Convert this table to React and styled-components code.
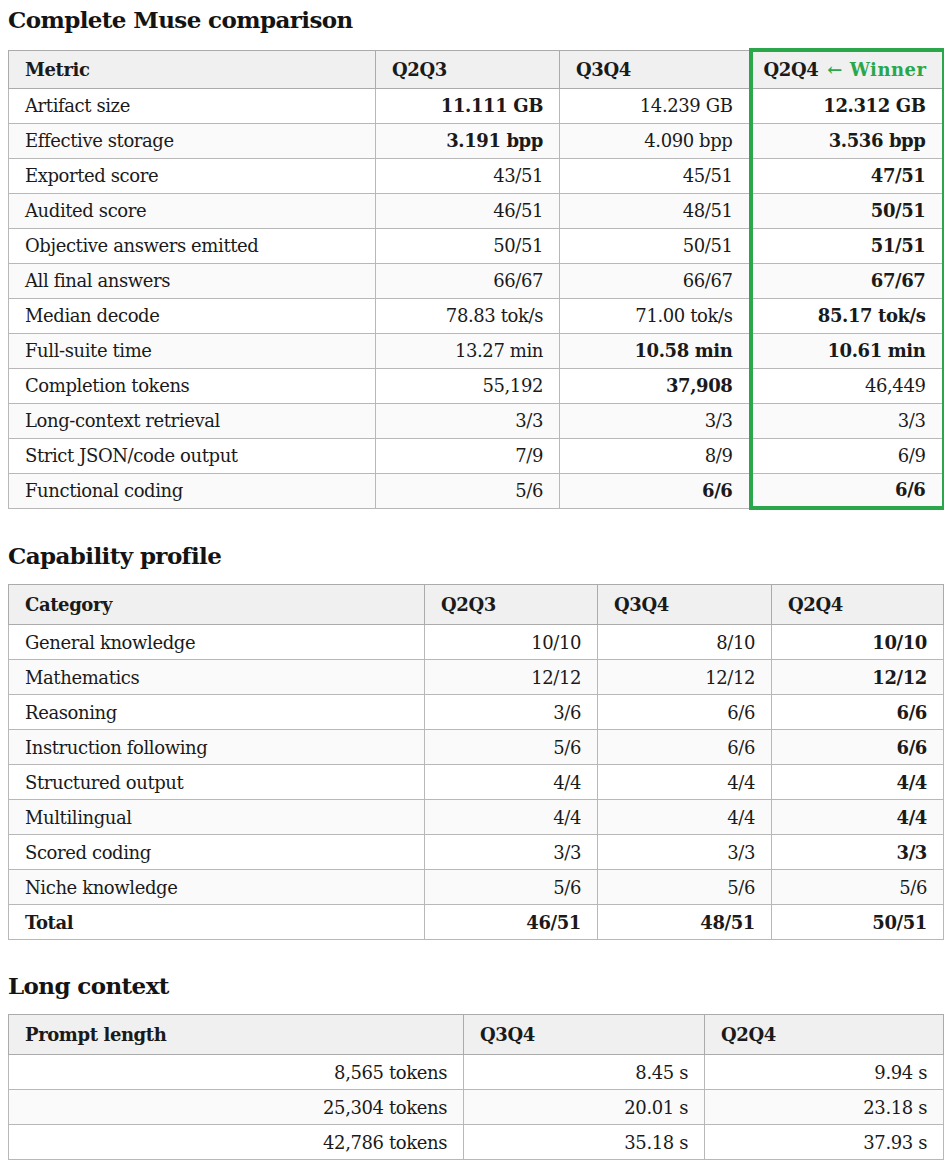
import React from 'react'
import styled, { createGlobalStyle } from 'styled-components'

const GlobalStyle = createGlobalStyle`
    body {
        margin: 8px;
        background: #ffffff;
        color: #1a1a1a;
        font-family: "DejaVu Serif", "Liberation Serif", serif;
    }
`

const Heading = styled.h2`
    margin: ${props => (props.$first ? '0' : '34px')} 0 16px;
    font-size: 23px;
    line-height: 24px;
    letter-spacing: -0.6px;
    font-weight: bold;
    color: #141414;
`

const Table = styled.table`
    width: 100%;
    border-collapse: collapse;
    table-layout: fixed;
    font-size: 18px;
    letter-spacing: -0.4px;
`

const HeadCell = styled.th`
    height: ${props => props.$h || 39}px;
    padding: 0 16px;
    text-align: left;
    font-weight: bold;
    background: #f0f0f0;
    border: 1px solid #ababab;
    white-space: nowrap;
    ${props => props.$winner && `
        padding-left: 11px;
        border-left: 4px solid #2aa74a;
        border-right: 4px solid #2aa74a;
        border-top: 4px solid #2aa74a;
    `}
`

const Row = styled.tr`
    background: ${props => (props.$odd ? '#fafafa' : '#ffffff')};
`

const Cell = styled.td`
    height: 34px;
    padding: 0 16px;
    border: 1px solid #b8b8b8;
    text-align: ${props => props.$align || 'right'};
    font-weight: ${props => (props.$bold ? 'bold' : 'normal')};
    white-space: nowrap;
    ${props => props.$winner && `
        border-left: 4px solid #2aa74a;
        border-right: 4px solid #2aa74a;
    `}
    ${props => props.$winner && props.$last && `
        height: 32px;
        border-bottom: 4px solid #2aa74a;
    `}
`

const WinnerTag = styled.span`
    margin-left: 9px;
    font-size: 18px;
    letter-spacing: 0.5px;
    color: #2aa74a;
    font-weight: bold;
`

// [label, [value, bold]...]
const museRows = [
    ['Artifact size', ['11.111 GB', 1], ['14.239 GB', 0], ['12.312 GB', 1]],
    ['Effective storage', ['3.191 bpp', 1], ['4.090 bpp', 0], ['3.536 bpp', 1]],
    ['Exported score', ['43/51', 0], ['45/51', 0], ['47/51', 1]],
    ['Audited score', ['46/51', 0], ['48/51', 0], ['50/51', 1]],
    ['Objective answers emitted', ['50/51', 0], ['50/51', 0], ['51/51', 1]],
    ['All final answers', ['66/67', 0], ['66/67', 0], ['67/67', 1]],
    ['Median decode', ['78.83 tok/s', 0], ['71.00 tok/s', 0], ['85.17 tok/s', 1]],
    ['Full-suite time', ['13.27 min', 0], ['10.58 min', 1], ['10.61 min', 1]],
    ['Completion tokens', ['55,192', 0], ['37,908', 1], ['46,449', 0]],
    ['Long-context retrieval', ['3/3', 0], ['3/3', 0], ['3/3', 0]],
    ['Strict JSON/code output', ['7/9', 0], ['8/9', 0], ['6/9', 0]],
    ['Functional coding', ['5/6', 0], ['6/6', 1], ['6/6', 1]],
]

const capabilityRows = [
    ['General knowledge', ['10/10', 0], ['8/10', 0], ['10/10', 1]],
    ['Mathematics', ['12/12', 0], ['12/12', 0], ['12/12', 1]],
    ['Reasoning', ['3/6', 0], ['6/6', 0], ['6/6', 1]],
    ['Instruction following', ['5/6', 0], ['6/6', 0], ['6/6', 1]],
    ['Structured output', ['4/4', 0], ['4/4', 0], ['4/4', 1]],
    ['Multilingual', ['4/4', 0], ['4/4', 0], ['4/4', 1]],
    ['Scored coding', ['3/3', 0], ['3/3', 0], ['3/3', 1]],
    ['Niche knowledge', ['5/6', 0], ['5/6', 0], ['5/6', 0]],
]

const contextRows = [
    ['8,565 tokens', '8.45 s', '9.94 s'],
    ['25,304 tokens', '20.01 s', '23.18 s'],
    ['42,786 tokens', '35.18 s', '37.93 s'],
]

const Columns = ({ widths }) => (
    <colgroup>
        {widths.map((w, i) => <col key={i} style={{ width: w }} />)}
    </colgroup>
)

const MuseTable = () => (
    <Table>
        <Columns widths={[367, 184, 191, 193]} />
        <thead>
            <tr>
                <HeadCell $h={37}>Metric</HeadCell>
                <HeadCell $h={37}>Q2Q3</HeadCell>
                <HeadCell $h={37}>Q3Q4</HeadCell>
                <HeadCell $h={35} $winner>Q2Q4<WinnerTag>← Winner</WinnerTag></HeadCell>
            </tr>
        </thead>
        <tbody>
            {museRows.map(([label, ...vals], i) => (
                <Row key={label} $odd={i % 2 === 1}>
                    <Cell $align="left">{label}</Cell>
                    {vals.map(([v, b], j) => (
                        <Cell
                            key={j}
                            $bold={b}
                            $winner={j === 2}
                            $last={i === museRows.length - 1}
                        >
                            {v}
                        </Cell>
                    ))}
                </Row>
            ))}
        </tbody>
    </Table>
)

const CapabilityTable = () => (
    <Table>
        <Columns widths={[416, 173, 174, 172]} />
        <thead>
            <tr>
                <HeadCell>Category</HeadCell>
                <HeadCell>Q2Q3</HeadCell>
                <HeadCell>Q3Q4</HeadCell>
                <HeadCell>Q2Q4</HeadCell>
            </tr>
        </thead>
        <tbody>
            {capabilityRows.map(([label, ...vals], i) => (
                <Row key={label} $odd={i % 2 === 1}>
                    <Cell $align="left">{label}</Cell>
                    {vals.map(([v, b], j) => (
                        <Cell key={j} $bold={b}>{v}</Cell>
                    ))}
                </Row>
            ))}
            <Row>
                <Cell $align="left" $bold>Total</Cell>
                <Cell $bold>46/51</Cell>
                <Cell $bold>48/51</Cell>
                <Cell $bold>50/51</Cell>
            </Row>
        </tbody>
    </Table>
)

const ContextTable = () => (
    <Table>
        <Columns widths={[455, 241, 239]} />
        <thead>
            <tr>
                <HeadCell>Prompt length</HeadCell>
                <HeadCell>Q3Q4</HeadCell>
                <HeadCell>Q2Q4</HeadCell>
            </tr>
        </thead>
        <tbody>
            {contextRows.map((r, i) => (
                <Row key={r[0]} $odd={i % 2 === 1}>
                    {r.map(v => <Cell key={v}>{v}</Cell>)}
                </Row>
            ))}
        </tbody>
    </Table>
)

const App = () => (
    <>
        <GlobalStyle />
        <Heading $first>Complete Muse comparison</Heading>
        <MuseTable />
        <Heading>Capability profile</Heading>
        <CapabilityTable />
        <Heading>Long context</Heading>
        <ContextTable />
    </>
)

export default App
